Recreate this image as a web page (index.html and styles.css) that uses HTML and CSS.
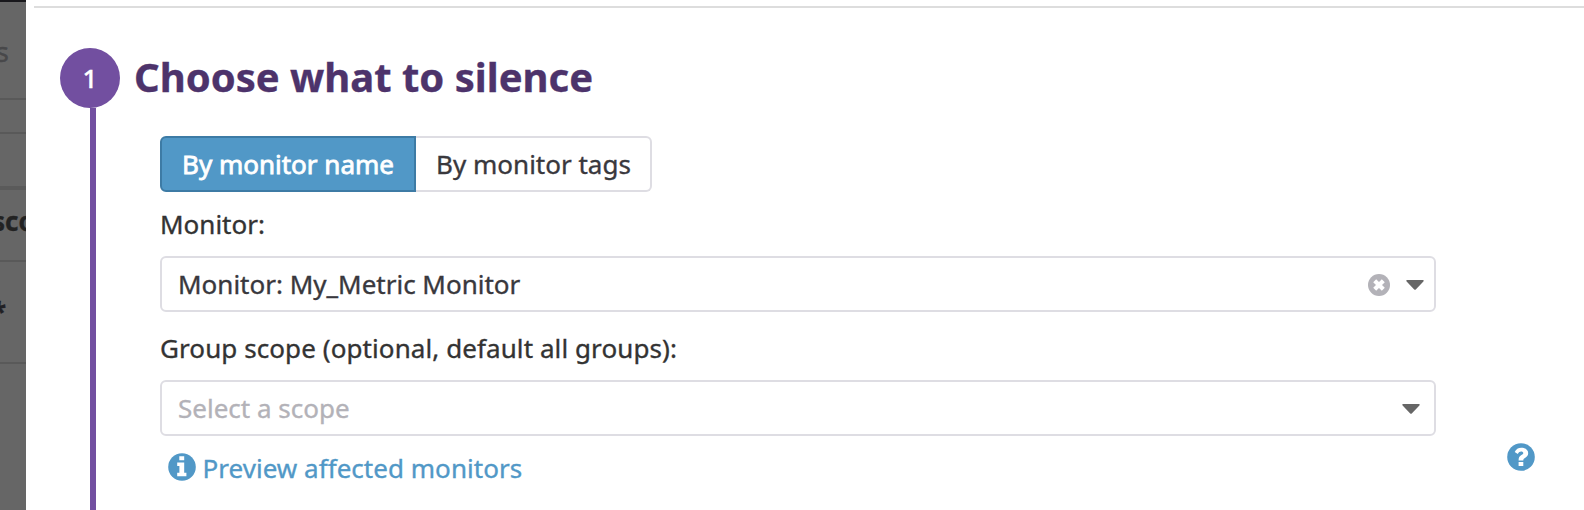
FILE: index.html
```html
<!DOCTYPE html>
<html lang="en">
<head>
<meta charset="utf-8">
<title>Choose what to silence</title>
<link rel="stylesheet" href="styles.css">
</head>
<body>
<div class="app">
  <aside class="backdrop">
    <div class="row row-top"></div>
    <div class="row row-search"><span class="frag">s</span></div>
    <div class="row row-gap"></div>
    <div class="row row-filter"></div>
    <div class="row row-head"><span class="frag">sco</span></div>
    <div class="row row-star"><span class="frag">*</span></div>
  </aside>
  <main class="panel">
    <div class="rule"></div>
    <section class="step">
      <div class="rail">
        <div class="number">1</div>
        <div class="line"></div>
      </div>
      <div class="content">
        <h1 class="title">Choose what to silence</h1>
        <div class="form">
          <div class="toggle">
            <button class="option active">By monitor name</button>
            <button class="option">By monitor tags</button>
          </div>
          <div class="label">Monitor:</div>
          <div class="select">
            <span class="value">Monitor: My_Metric Monitor</span>
            <svg class="clear" viewBox="0 0 22 22"><circle cx="11" cy="11" r="11" fill="#b3b2b8"/><path d="M6.7 6.7l8.6 8.6M15.3 6.7l-8.6 8.6" stroke="#fff" stroke-width="4.2"/></svg>
            <svg class="caret" viewBox="0 0 18 10"><path d="M1 0H17Q18.2.3 17.4 1.4L10 9.3Q9 10.4 8 9.3L.6 1.4Q-.2.3 1 0Z" fill="#666"/></svg>
          </div>
          <div class="label label-scope">Group scope (optional, default all groups):</div>
          <div class="select select-scope">
            <span class="value placeholder">Select a scope</span>
            <svg class="caret" viewBox="0 0 18 10"><path d="M1 0H17Q18.2.3 17.4 1.4L10 9.3Q9 10.4 8 9.3L.6 1.4Q-.2.3 1 0Z" fill="#666"/></svg>
          </div>
          <div class="preview">
            <svg class="info" viewBox="0 0 28 28"><circle cx="14" cy="14" r="13.8" fill="#5198c7"/><path d="M11.3 3.2h4.9v4.1h-4.9zM9.2 9.4h7v10.4h2.2v3.5H9.2v-3.5h2.2v-6.9H9.2z" fill="#fff"/></svg>
            <span>Preview affected monitors</span>
          </div>
        </div>
      </div>
      <svg class="help" viewBox="0 0 28 28"><circle cx="14" cy="14" r="13.8" fill="#5198c7"/><path d="M11.6 18.9h4.7v4.2h-4.7zM7.7 8.9C9 6.2 11.2 4.7 14.3 4.7c3.7 0 6.9 2.2 6.9 5.4 0 2.5-1.4 3.7-3.2 4.8-1.3.8-1.7 1.2-1.7 2.5h-4.7c0-2.8.8-4.2 2.8-5.3 1.5-.8 1.9-1.2 1.9-2 0-1-1-1.6-2.2-1.6-1.4 0-2.2.7-3.3 2.4z" fill="#fff"/></svg>
    </section>
  </main>
</div>
</body>
</html>
```
FILE: styles.css
```css
* { box-sizing: border-box; }
body {
  margin: 0;
  font-family: "Noto Sans", sans-serif;
  font-size: 26px;
  line-height: 36px;
  color: #333;
  background: #fff;
  -webkit-text-stroke: 0.35px currentColor;
}
.app { display: flex; width: 1584px; height: 510px; overflow: hidden; }

.backdrop { width: 26px; flex: none; background: #666; overflow: hidden; }
.row { display: flex; justify-content: flex-end; align-items: flex-start; border-bottom: 2px solid #595959; overflow: hidden; }
.row-top { height: 2px; border-bottom-color: #19181c; }
.row-search { height: 98px; padding: 31px 17px 0 0; font-size: 28px; color: #48484a; }
.row-gap { height: 34px; }
.row-filter { height: 56px; border-bottom: 4px solid #5a5a5a; }
.row-head { height: 72px; padding-top: 13px; color: #222; font-weight: 700; justify-content: flex-start; }
.row-head .frag { margin-left: -8px; }
.row-star { height: 102px; padding: 32px 20px 0 0; color: #202024; font-weight: 700; }

.panel { flex: 1; display: flex; flex-direction: column; padding: 6px 0 0 8px; }
.rule { height: 2px; background: #ddd; flex: none; }
.step { flex: 1; display: flex; padding: 40px 49px 0 26px; }
.rail { width: 60px; display: flex; flex-direction: column; align-items: center; }
.number {
  width: 60px; height: 60px; flex: none;
  border-radius: 50%;
  background: #724fa0; color: #fff;
  text-align: center; line-height: 60px; font-weight: 500;
}
.line { width: 6px; flex: 1; margin-left: 6px; background: #724fa0; }
.content { width: 1316px; padding-left: 14px; }
.title { margin: 0; font-size: 40px; line-height: 58px; font-weight: 700; color: #4d336b; white-space: nowrap; }
.form { padding: 30px 0 0 26px; width: 1302px; }
.toggle { display: flex; height: 56px; }
.option {
  width: 236px; padding: 0 0 0 1px; font: inherit; color: #39383d; background: #fff;
  border: 2px solid #dedde3; border-left: 0; border-radius: 0 6px 6px 0; white-space: nowrap;
  -webkit-text-stroke: inherit;
  -webkit-text-stroke-color: currentColor;
}
.option.active {
  width: 256px; padding: 0; color: #fff; background: #5198c7;
  border: 2px solid #3d7ba5; border-radius: 6px 0 0 6px;
  -webkit-text-stroke-width: 0.8px;
}
.label { height: 36px; margin: 14px 0; white-space: nowrap; }
.label-scope { margin: 18px 0 14px; letter-spacing: 0.085px; }
.select {
  display: flex; align-items: center; height: 56px;
  border: 2px solid #dedde3; border-radius: 6px;
  padding: 0 10px 0 16px; color: #39383d;
}
.select-scope { padding-right: 14px; }
.value { flex: 1; white-space: nowrap; }
.placeholder { color: #b3b2b8; }
.clear { width: 22px; height: 22px; margin: 2px 16px 0 0; }
.caret { width: 18px; height: 10px; margin-top: 2px; }
.preview { display: flex; align-items: center; gap: 7px; height: 36px; margin-top: 14px; padding-left: 7.5px; letter-spacing: 0.03px; color: #5198c7; white-space: nowrap; }
.info { width: 28px; height: 28px; margin-top: -3px; }
.help { width: 28px; height: 28px; flex: none; margin: 395px 0 0 auto; }
```
